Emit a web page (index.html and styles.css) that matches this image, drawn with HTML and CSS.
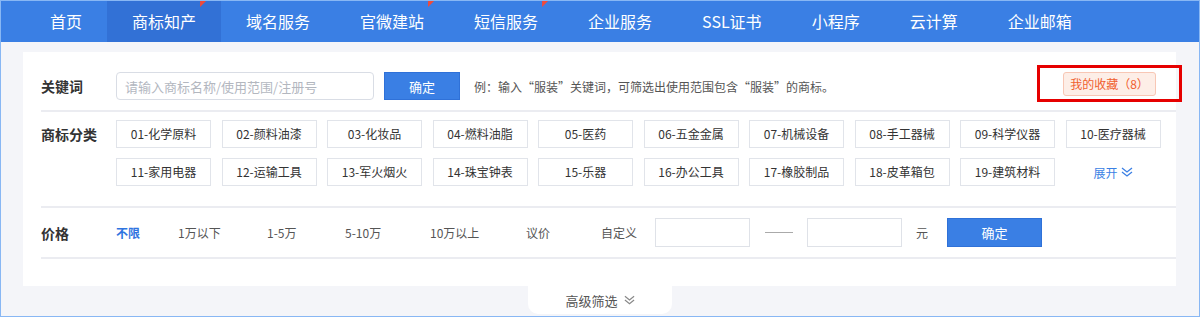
FILE: index.html
```html
<!DOCTYPE html>
<html>
<head>
    <title>商标知产</title>
    <link rel="stylesheet" href="styles.css">
</head>
<body>
<div class="page">
    <nav class="nav">
        <a class="nav-item">首页</a>
        <a class="nav-item active hot">商标知产</a>
        <a class="nav-item">域名服务</a>
        <a class="nav-item hot">官微建站</a>
        <a class="nav-item hot">短信服务</a>
        <a class="nav-item">企业服务</a>
        <a class="nav-item">SSL证书</a>
        <a class="nav-item">小程序</a>
        <a class="nav-item">云计算</a>
        <a class="nav-item">企业邮箱</a>
    </nav>

    <div class="main">
        <div class="filter">
            <div class="row row-keyword">
                <span class="row-label">关键词</span>
                <input type="text" class="kw-input" placeholder="请输入商标名称/使用范围/注册号">
                <button class="btn btn-kw">确定</button>
                <span class="hint">例：输入“服装”关键词，可筛选出使用范围包含“服装”的商标。</span>
                <div class="fav-mark">
                    <a class="fav-btn">我的收藏（8）</a>
                </div>
            </div>

            <div class="row row-class">
                <span class="row-label">商标分类</span>
                <div class="tags">
                    <a class="tag">01-化学原料</a>
                    <a class="tag">02-颜料油漆</a>
                    <a class="tag">03-化妆品</a>
                    <a class="tag">04-燃料油脂</a>
                    <a class="tag">05-医药</a>
                    <a class="tag">06-五金金属</a>
                    <a class="tag">07-机械设备</a>
                    <a class="tag">08-手工器械</a>
                    <a class="tag">09-科学仪器</a>
                    <a class="tag">10-医疗器械</a>
                    <a class="tag">11-家用电器</a>
                    <a class="tag">12-运输工具</a>
                    <a class="tag">13-军火烟火</a>
                    <a class="tag">14-珠宝钟表</a>
                    <a class="tag">15-乐器</a>
                    <a class="tag">16-办公工具</a>
                    <a class="tag">17-橡胶制品</a>
                    <a class="tag">18-皮革箱包</a>
                    <a class="tag">19-建筑材料</a>
                    <a class="expand">展开
                        <svg class="chev" width="12" height="10" viewBox="0 0 12 10"><polyline points="1,1 6,5 11,1"/><polyline points="1,5 6,9 11,5"/></svg>
                    </a>
                </div>
            </div>

            <div class="row row-price">
                <span class="row-label">价格</span>
                <div class="price-opts">
                    <a class="opt current">不限</a>
                    <a class="opt">1万以下</a>
                    <a class="opt">1-5万</a>
                    <a class="opt">5-10万</a>
                    <a class="opt">10万以上</a>
                    <a class="opt">议价</a>
                </div>
                <span class="custom-label">自定义</span>
                <input type="text" class="price-input">
                <span class="dash"></span>
                <input type="text" class="price-input">
                <span class="unit">元</span>
                <button class="btn btn-price">确定</button>
            </div>
        </div>

        <div class="more-tab">高级筛选
            <svg class="chev" width="11" height="10" viewBox="0 0 12 10"><polyline points="1,1 6,5 11,1"/><polyline points="1,5 6,9 11,5"/></svg>
        </div>
    </div>
</div>
</body>
</html>
```

FILE: styles.css
```css
body {
    margin: 0;
    font-family: "Noto Sans CJK SC", "Liberation Sans", sans-serif;
    color: #333;
}
a {
    text-decoration: none;
    cursor: pointer;
}
.page {
    width: 1200px;
    height: 317px;
    box-sizing: border-box;
    border: 1px solid #88b7f4;
    background: #f4f5f9;
    overflow: hidden;
}

/* top nav */
.nav {
    display: flex;
    height: 41px;
    padding-left: 24px;
    background: #3a7fe4;
}
.nav-item {
    position: relative;
    padding: 0 25px;
    line-height: 41px;
    font-size: 16px;
    color: #fff;
}
.nav-item.active {
    background: #3271d6;
}
.nav-item.hot::after {
    content: "";
    position: absolute;
    top: 0;
    right: 15px;
    width: 6px;
    height: 6px;
    background: #f04a3a;
    clip-path: polygon(0 0, 100% 0, 0 100%);
}

/* filter card */
.main {
    padding-top: 10px;
}
.filter {
    margin: 0 23px 0 22px;
    padding: 0 0 27px 18px;
    background: #fff;
}
.row {
    display: flex;
    align-items: center;
    border-bottom: 2px solid #ebecf1;
}
.row-label {
    width: 75px;
    flex-shrink: 0;
    font-size: 14px;
    font-weight: bold;
    color: #333;
}
.btn {
    background: #3a7fe4;
    border: 1px solid #2f71d8;
    color: #fff;
    font-family: inherit;
    font-size: 13px;
    cursor: pointer;
}

.row-keyword {
    padding: 20px 0 10px;
}
.kw-input {
    width: 258px;
    height: 28px;
    box-sizing: border-box;
    padding: 0 8px;
    border: 1px solid #d9dde5;
    border-radius: 4px;
    font-family: inherit;
    font-size: 13px;
    outline: none;
}
.kw-input::placeholder {
    color: #b3b7bf;
}
.btn-kw {
    width: 76px;
    height: 28px;
    margin-left: 10px;
}
.hint {
    margin-left: 14px;
    font-size: 12px;
    color: #555;
}
.fav-mark {
    margin: -7px -6px -2px auto;
    padding: 4px 23px 3px;
    border: 3px solid #e60000;
}
.fav-btn {
    display: block;
    width: 93px;
    height: 24px;
    box-sizing: border-box;
    border: 1px solid #f8c7b5;
    border-radius: 3px;
    background: #fdeee7;
    color: #f0602e;
    font-size: 12px;
    line-height: 22px;
    text-align: center;
}

.row-class {
    align-items: flex-start;
    padding: 8px 0 20px;
}
.row-class .row-label {
    line-height: 28px;
}
.tags {
    display: grid;
    grid-template-columns: repeat(10, 95px);
    column-gap: 10.5px;
    row-gap: 10px;
}
.tag {
    height: 28px;
    box-sizing: border-box;
    border: 1px solid #e1e4ea;
    font-size: 12px;
    line-height: 26px;
    text-align: center;
    color: #333;
}
.expand {
    display: flex;
    align-items: center;
    justify-content: center;
    gap: 3px;
    font-size: 12px;
    color: #3a7fe4;
}
.chev {
    fill: none;
    stroke: currentColor;
    stroke-width: 1.3;
}

.row-price {
    padding: 10px 0;
}
.price-opts {
    display: grid;
    grid-template-columns: 62px 89px 78px 85px 96px 75px;
    font-size: 12px;
}
.opt {
    color: #555;
}
.opt.current {
    color: #2f74e0;
    font-weight: bold;
}
.custom-label {
    width: 54px;
    font-size: 12px;
    color: #555;
}
.price-input {
    width: 95px;
    height: 29px;
    box-sizing: border-box;
    border: 1px solid #dfe2e8;
    outline: none;
}
.dash {
    width: 28px;
    margin: 0 14px 0 15px;
    border-top: 1px solid #aaa;
}
.unit {
    margin-left: 14px;
    font-size: 12px;
    color: #555;
}
.btn-price {
    width: 95px;
    height: 29px;
    margin-left: 19px;
}

.more-tab {
    display: flex;
    align-items: center;
    justify-content: center;
    gap: 6px;
    width: 144px;
    height: 28px;
    margin: 0 auto;
    border-radius: 0 0 10px 10px;
    background: #fff;
    font-size: 13px;
    color: #555;
}
.more-tab .chev {
    stroke: #888;
}
```
